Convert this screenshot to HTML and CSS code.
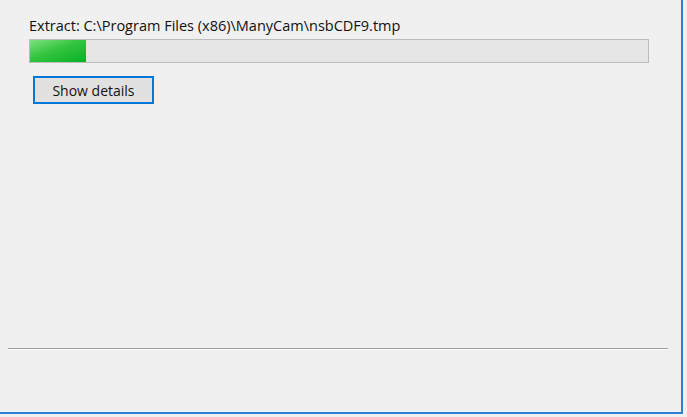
FILE: index.html
```html
<!DOCTYPE html>
<html>
<head lang="en">
    <meta charset="UTF-8">
    <title>ManyCam Setup</title>
    <link rel="stylesheet" href="styles.css">
</head>
<body>
<div id="window">
    <div id="content">
        <div class="status">Extract: C:\Program Files (x86)\ManyCam\nsbCDF9.tmp</div>
        <div class="progress">
            <div class="fill" style="width: 56px;"></div>
        </div>
        <button class="details">Show details</button>
    </div>
    <div class="separator"></div>
</div>
</body>
</html>
```

FILE: styles.css
```css
*{
    margin: 0;
    padding: 0;
    box-sizing: border-box;
}
body{
    background: #f0f0f0;
    font-family: "Open Sans", "Liberation Sans", sans-serif;
    font-size: 14.5px;
    color: #111;
}
#window{
    width: 683px;
    height: 414px;
    background: #f0f0f0;
    border-right: 2px solid #2b7fd6;
    border-bottom: 2px solid #2b7fd6;
    display: flex;
    flex-direction: column;
}
#content{
    padding: 16px 0 0 29px;
}
.status{
    height: 23px;
    line-height: 20px;
}
.progress{
    width: 620px;
    height: 24px;
    border: 1px solid #bcbcbc;
    background: #e6e6e6;
}
.fill{
    height: 100%;
    background: linear-gradient(160deg, #7ee27e 0%, #35c43f 45%, #06b025 100%);
}
.details{
    margin: 13px 0 0 4px;
    width: 121px;
    height: 28px;
    border: 2px solid #0078d7;
    background: #e1e1e1;
    font-family: inherit;
    font-size: 14px;
    color: #111;
}
.separator{
    margin: auto 0 62px 8px;
    width: 660px;
    height: 2px;
    border-top: 1px solid #a0a0a0;
    border-bottom: 1px solid #fff;
}
```
